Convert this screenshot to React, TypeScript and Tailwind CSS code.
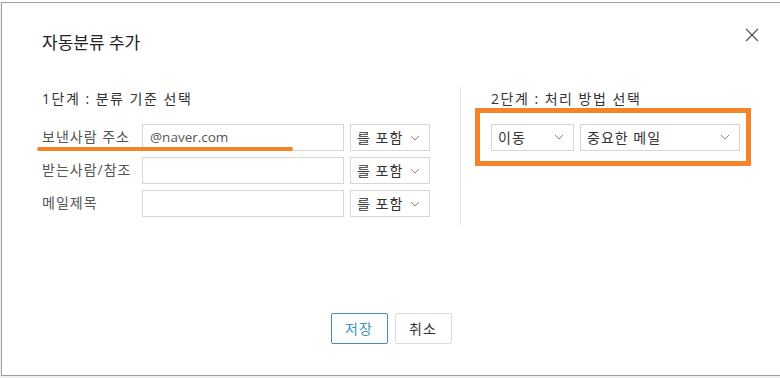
const font = { fontFamily: '"Open Sans", "Noto Sans CJK KR", sans-serif' };

function Chevron() {
  return (
    <svg width="10" height="6" viewBox="0 0 10 6" className="shrink-0">
      <polyline points="1,1 5,5 9,1" fill="none" stroke="#8a8a8a" strokeWidth="1" />
    </svg>
  );
}

function Select({ label, w }: { label: string; w: string }) {
  return (
    <div
      className={`${w} h-[27px] border border-[#d6d6d6] bg-white flex items-center justify-between pl-[6px] pr-[9px] text-[14px] tracking-[1px] text-[#333]`}
    >
      <span>{label}</span>
      <Chevron />
    </div>
  );
}

function Row({ label, value, underline }: { label: string; value?: string; underline?: boolean }) {
  return (
    <div className="relative flex items-center h-[27px]">
      <span className="w-[100px] text-[14px] tracking-[1px] text-[#555] -mt-[3px]">{label}</span>
      <div className="w-[202px] h-[27px] border border-[#d6d6d6] flex items-center px-[7px] text-[13.5px] text-[#555]">
        {value}
      </div>
      <div className="ml-[6px]">
        <Select label="를 포함" w="w-[80px]" />
      </div>
      {underline && (
        <div className="absolute -left-[5px] top-[23px] w-[256px] h-[4px] rounded-full bg-[#f5832a]" />
      )}
    </div>
  );
}

export default function App() {
  return (
    <div className="w-[780px] h-[378px] bg-[#f0f0f0] overflow-hidden" style={font}>
      <div className="h-[2px] bg-white" />
      <div className="relative ml-[1px] h-[374px] border border-r-0 border-[#9e9e9e] bg-white flex flex-col">
        <button className="absolute left-[743px] top-[25px] w-[14px] h-[14px]">
          <svg width="14" height="14" viewBox="0 0 14 14">
            <path d="M1 1 L13 13 M13 1 L1 13" stroke="#555" strokeWidth="1.2" />
          </svg>
        </button>

        <h1 className="ml-[40px] mt-[27px] text-[17px] leading-[26px] text-[#222]">자동분류 추가</h1>

        <div className="flex mt-[31px]">
          <div className="ml-[40px] w-[418px] pt-[3px] pb-[8px]">
            <p className="text-[14px] leading-[18px] tracking-[1.5px] text-[#333]">1단계 : 분류 기준 선택</p>
            <div className="mt-[16px] flex flex-col gap-[6px]">
              <Row label="보낸사람 주소" value="@naver.com" underline />
              <Row label="받는사람/참조" />
              <Row label="메일제목" />
            </div>
          </div>

          <div className="w-px bg-[#e6e6e6]" />

          <div className="ml-[14px]">
            <p className="ml-[16px] mt-[3px] text-[14px] leading-[18px] tracking-[1.5px] text-[#333]">2단계 : 처리 방법 선택</p>
            <div className="w-[276px] h-[58px] border-[5px] border-[#f5832a] flex items-center gap-[6px] pl-[11px]">
              <Select label="이동" w="w-[83px]" />
              <Select label="중요한 메일" w="w-[160px]" />
            </div>
          </div>
        </div>

        <div className="mt-auto mb-[31px] flex justify-center gap-[7px]">
          <button className="w-[57px] h-[31px] border border-[#4a8cab] rounded-[2px] text-[14px] tracking-[1px] text-[#3d93b8]">
            저장
          </button>
          <button className="w-[57px] h-[31px] border border-[#dcdcdc] rounded-[2px] text-[14px] tracking-[1px] text-[#333]">
            취소
          </button>
        </div>
      </div>
    </div>
  );
}
